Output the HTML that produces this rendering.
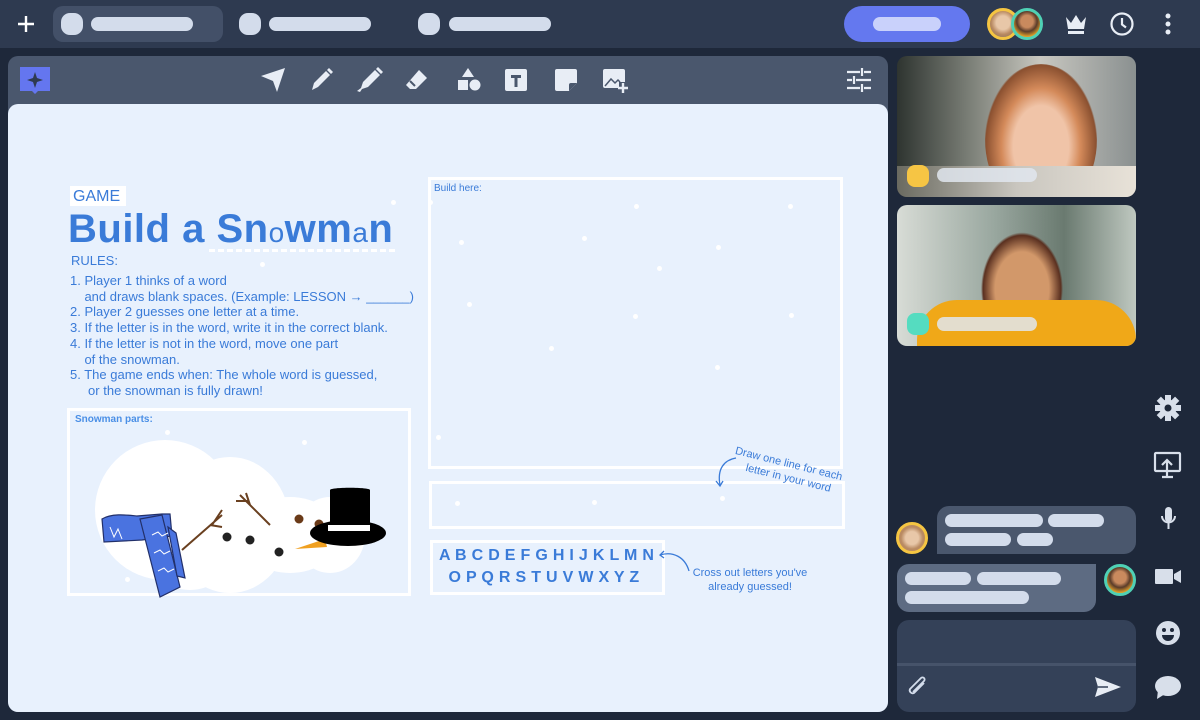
<!DOCTYPE html>
<html><head><meta charset="utf-8">
<style>
*{margin:0;padding:0;box-sizing:border-box}
body{width:1200px;height:720px;background:#1e283a;font-family:"Liberation Sans",sans-serif;position:relative;overflow:hidden}
.abs{position:absolute}
.pill{position:absolute;background:#d3dceb;border-radius:8px}
.blue{color:#3a7bd8}
.box{position:absolute;border:3px solid #fff}
.dot{position:absolute;width:5px;height:5px;border-radius:50%;background:#fff}
</style></head><body>
<!-- top bar -->
<div class="abs" style="left:0;top:0;width:1200px;height:48px;background:#2e3a50"></div>
<svg class="abs" style="left:16px;top:14px" width="20" height="20"><path d="M10 2v16M2 10h16" stroke="#fff" stroke-width="2.4"/></svg>
<div class="abs" style="left:53px;top:6px;width:170px;height:36px;border-radius:10px;background:#435068"></div>
<div class="pill" style="left:61px;top:13px;width:22px;height:22px;border-radius:9px"></div>
<div class="pill" style="left:91px;top:17px;width:102px;height:14px"></div>
<div class="pill" style="left:239px;top:13px;width:22px;height:22px;border-radius:9px"></div>
<div class="pill" style="left:269px;top:17px;width:102px;height:14px"></div>
<div class="pill" style="left:418px;top:13px;width:22px;height:22px;border-radius:9px"></div>
<div class="pill" style="left:449px;top:17px;width:102px;height:14px"></div>
<div class="abs" style="left:844px;top:6px;width:126px;height:36px;border-radius:18px;background:#6478ef"></div>
<div class="abs" style="left:873px;top:17px;width:68px;height:14px;border-radius:7px;background:#c9d1fb"></div>
<div class="abs" style="left:987px;top:8px;width:32px;height:32px;border-radius:50%;background:radial-gradient(circle at 50% 45%,#e8c7a8 0 35%,#b98a62 60%,#7b6a5a);border:3px solid #f5c542"></div>
<div class="abs" style="left:1011px;top:8px;width:32px;height:32px;border-radius:50%;background:radial-gradient(circle at 50% 40%,#c98a5e 0 30%,#5a3c2a 50%,#e0a12a 75%);border:3px solid #4fd1b5"></div>
<svg class="abs" style="left:1064px;top:13px" width="24" height="22"><path d="M2 4l5 6 5-8 5 8 5-6-2 12H4z" fill="#e8edf5"/><rect x="4" y="18" width="16" height="3" fill="#e8edf5"/></svg>
<svg class="abs" style="left:1109px;top:11px" width="26" height="26"><circle cx="13" cy="13" r="10.5" fill="none" stroke="#e8edf5" stroke-width="2.2"/><path d="M13 7v6.5l4 3" fill="none" stroke="#e8edf5" stroke-width="2.2"/></svg>
<svg class="abs" style="left:1163px;top:13px" width="10" height="22"><circle cx="5" cy="3" r="2.5" fill="#e8edf5"/><circle cx="5" cy="11" r="2.5" fill="#e8edf5"/><circle cx="5" cy="19" r="2.5" fill="#e8edf5"/></svg>

<!-- whiteboard -->
<div class="abs" style="left:8px;top:56px;width:880px;height:656px;border-radius:10px;background:#4a576d"></div>
<div class="abs" style="left:8px;top:104px;width:880px;height:608px;border-radius:10px;background:#e8f1fd"></div>
<svg class="abs" style="left:20px;top:66px" width="30" height="28"><path d="M0 1h30v24H18l-3 3-3-3H0z" fill="#6476ef"/><path d="M15 6l2 6 6 2-6 2-2 6-2-6-6-2 6-2z" fill="#2e3a50"/></svg>
<svg class="abs" style="left:255px;top:64px" width="400" height="32" fill="#e8edf5">
<path d="M6 12L30 4 22 28 18 17z"/>
<g transform="translate(55,4)"><path d="M2 22l2-7L16 3l4 4L8 19z"/><path d="M17 2l2-2 4 4-2 2z"/></g>
<g transform="translate(102,3)"><path d="M0 24l4-3 2-6L18 3l5 5-12 12-6 2-2 3z"/><path d="M19 2l2-2 5 5-2 2z"/></g>
<g transform="translate(150,4)"><path d="M14 2l8 8-11 11H5l-4-4z" fill="#e8edf5"/><path d="M5 13l5 5" stroke="#4a576d" stroke-width="2"/></g>
<g transform="translate(201,4)"><path d="M12 0l6 9H6z"/><rect x="2" y="12" width="10" height="10"/><circle cx="19" cy="17" r="5.5"/></g>
<g transform="translate(250,5)"><rect width="22" height="22" rx="2"/><path d="M6 6h10v3h-3.5v9h-3V9H6z" fill="#4a576d"/></g>
<g transform="translate(300,5)"><path d="M0 2a2 2 0 012-2h18a2 2 0 012 2v12l-8 8H2a2 2 0 01-2-2z"/><path d="M14 22v-6a2 2 0 012-2h6" fill="#4a576d"/></g>
<g transform="translate(348,5)"><path d="M0 2a2 2 0 012-2h18a2 2 0 012 2v11h-6v6H2a2 2 0 01-2-2z"/><path d="M2 17l6-7 4 4 3-3 2 2" fill="none" stroke="#4a576d" stroke-width="1.5"/><path d="M20 14v10M15 19h10" stroke="#e8edf5" stroke-width="2.4"/></g>
</svg>
<svg class="abs" style="left:847px;top:68px" width="24" height="24" stroke="#e8edf5" stroke-width="2.2"><path d="M0 4h13M17 4h7M15 0v8M0 12h5M9 12h15M7 8v8M0 20h13M17 20h7M15 16v8"/></svg>

<!-- snow dots -->
<div class="dot" style="left:428px;top:200px"></div><div class="dot" style="left:459px;top:240px"></div><div class="dot" style="left:634px;top:204px"></div><div class="dot" style="left:582px;top:236px"></div><div class="dot" style="left:716px;top:245px"></div><div class="dot" style="left:788px;top:204px"></div><div class="dot" style="left:657px;top:266px"></div><div class="dot" style="left:467px;top:302px"></div><div class="dot" style="left:549px;top:346px"></div><div class="dot" style="left:715px;top:365px"></div><div class="dot" style="left:633px;top:314px"></div><div class="dot" style="left:789px;top:313px"></div><div class="dot" style="left:436px;top:435px"></div><div class="dot" style="left:720px;top:496px"></div><div class="dot" style="left:592px;top:500px"></div><div class="dot" style="left:455px;top:501px"></div><div class="dot" style="left:302px;top:440px"></div><div class="dot" style="left:165px;top:430px"></div><div class="dot" style="left:260px;top:262px"></div><div class="dot" style="left:391px;top:200px"></div><div class="dot" style="left:125px;top:577px"></div>

<!-- text -->
<div class="abs blue" style="left:70px;top:186px;width:56px;height:20px;background:#fff;font-size:16px;padding:1px 3px;line-height:19px">GAME</div>
<div class="abs blue" style="left:68px;top:205px;font-size:40px;line-height:48px;font-weight:bold;white-space:nowrap;letter-spacing:0.5px">Build a Sn<span style="font-size:28px;font-weight:normal">o</span>wm<span style="font-size:28px;font-weight:normal">a</span>n</div>
<div class="abs" style="left:209px;top:249px;width:186px;border-top:3px dashed #fff"></div>
<div class="abs blue" style="left:71px;top:253px;font-size:13px;line-height:16px">RULES:</div>
<div class="abs blue" style="left:70px;top:273px;font-size:13px;line-height:15.7px;white-space:nowrap">1. Player 1 thinks of a word<br>&nbsp;&nbsp;&nbsp;&nbsp;and draws blank spaces. (Example: LESSON → ______)<br>2. Player 2 guesses one letter at a time.<br>3. If the letter is in the word, write it in the correct blank.<br>4. If the letter is not in the word, move one part<br>&nbsp;&nbsp;&nbsp;&nbsp;of the snowman.<br>5. The game ends when: The whole word is guessed,<br>&nbsp;&nbsp;&nbsp;&nbsp;&nbsp;or the snowman is fully drawn!</div>

<div class="box" style="left:428px;top:177px;width:415px;height:292px"></div>
<div class="abs blue" style="left:434px;top:183px;font-size:10px">Build here:</div>
<div class="box" style="left:429px;top:481px;width:416px;height:48px"></div>
<div class="box" style="left:430px;top:540px;width:235px;height:55px"></div>
<div class="abs blue" style="left:439px;top:545px;font-size:16px;line-height:22px;letter-spacing:0.3px;font-weight:bold;white-space:nowrap">A B C D E F G H I J K L M N<br>&nbsp;&nbsp;O P Q R S T U V W X Y Z</div>
<div class="abs blue" style="left:688px;top:566px;font-size:11px;line-height:14px;text-align:center;width:124px">Cross out letters you've<br>already guessed!</div>
<svg class="abs" style="left:655px;top:545px" width="40" height="30" fill="none" stroke="#3a7bd8" stroke-width="1.3"><path d="M34 26C30 12 18 6 5 10M9 6L5 10 9 13"/></svg>
<div class="abs blue" style="left:737px;top:444px;font-size:11px;line-height:14px;text-align:center;transform:rotate(14deg);transform-origin:left top;white-space:nowrap">Draw one line for each<br>&nbsp;&nbsp;letter in your word</div>
<svg class="abs" style="left:712px;top:455px" width="30" height="35" fill="none" stroke="#3a7bd8" stroke-width="1.3"><path d="M24 3C12 5 5 14 8 30M4 26l4 5 3-5"/></svg>

<!-- snowman parts -->
<div class="box" style="left:67px;top:408px;width:344px;height:188px"></div>
<div class="abs blue" style="left:75px;top:414px;font-size:10px;font-weight:bold;color:#4a8fe6">Snowman parts:</div>
<svg class="abs" style="left:90px;top:435px" width="310" height="170">
<g fill="#fff"><circle cx="75" cy="75" r="70"/><ellipse cx="140" cy="90" rx="60" ry="68"/><ellipse cx="200" cy="100" rx="50" ry="38"/><ellipse cx="240" cy="100" rx="35" ry="38"/><circle cx="100" cy="110" r="45"/></g>
<g fill="#4a73e0" stroke="#22306a" stroke-width="1.2"><path d="M12 84c10-6 25-4 35-3l25-2 8 0 2 22-30 4-38 2z"/><path d="M50 84l22-4 18 72-20 10z"/><path d="M78 92l8 6 9 45-8-2z"/></g>
<path d="M20 92l4 10 4-8 4 10M62 100l6 -3 4 4 6-3M64 118l6-3 4 4 6-3M68 136l6-3 4 4 6-3" stroke="#fff" fill="none" stroke-width="1"/>
<g stroke="#6a4020" stroke-width="2" fill="none"><path d="M92 115l40-35M122 90l10-15M120 90l12 2"/><path d="M180 90l-30-30M160 70l-4-12M158 66l-12 0"/></g>
<g fill="#222"><circle cx="137" cy="102" r="4.5"/><circle cx="160" cy="105" r="4.5"/><circle cx="189" cy="117" r="4.5"/></g>
<g fill="#6a3a18"><circle cx="209" cy="84" r="4.5"/><circle cx="229" cy="89" r="4.5"/></g>
<path d="M205 114l30-10 2 8z" fill="#f0a020"/>
<path d="M240 55c0-3 40-3 40 0v35h-40z" fill="#000"/><ellipse cx="258" cy="98" rx="38" ry="13" fill="#000"/><path d="M238 90h42v6h-42z" fill="#fff"/><rect x="240" y="80" width="40" height="10" fill="#000"/>
</svg>

<!-- videos -->
<div class="abs" style="left:897px;top:56px;width:239px;height:141px;border-radius:10px;overflow:hidden;background:linear-gradient(90deg,#2e3430,#7a7e76 30%,#c8c7c0 60%,#8a9090)">
 <div class="abs" style="left:88px;top:8px;width:112px;height:150px;border-radius:50%;background:radial-gradient(ellipse at 50% 55%,#f0c4a8 0 35%,#d48a5a 50%,#8a5030 70%,transparent 72%)"></div>
 <div class="abs" style="left:0;top:110px;width:239px;height:31px;background:linear-gradient(90deg,#6a6a60,#c9c6bf 50%,#e8e2d8)"></div>
</div>
<div class="abs" style="left:907px;top:165px;width:22px;height:22px;border-radius:8px;background:#f6c544"></div>
<div class="abs" style="left:937px;top:168px;width:100px;height:14px;border-radius:7px;background:#e1e6ee;opacity:.85"></div>
<div class="abs" style="left:897px;top:205px;width:239px;height:141px;border-radius:10px;overflow:hidden;background:linear-gradient(90deg,#d8dcd6,#9aa8a0 40%,#6a7a70 70%,#bfc8c0)">
 <div class="abs" style="left:75px;top:15px;width:100px;height:115px;border-radius:50%;background:radial-gradient(ellipse at 50% 60%,#d2986a 0 38%,#5a3020 55%,transparent 58%)"></div>
 <div class="abs" style="left:20px;top:95px;width:219px;height:60px;border-radius:40px 40px 0 0;background:#f0a818"></div>
</div>
<div class="abs" style="left:907px;top:313px;width:22px;height:22px;border-radius:8px;background:#55dcc0"></div>
<div class="abs" style="left:937px;top:317px;width:100px;height:14px;border-radius:7px;background:#e1e6ee;opacity:.85"></div>

<!-- chat -->
<div class="abs" style="left:937px;top:506px;width:199px;height:48px;border-radius:12px 12px 12px 0;background:#4a576d"></div>
<div class="pill" style="left:945px;top:514px;width:98px;height:13px;border-radius:7px"></div>
<div class="pill" style="left:1048px;top:514px;width:56px;height:13px;border-radius:7px"></div>
<div class="pill" style="left:945px;top:533px;width:66px;height:13px;border-radius:7px"></div>
<div class="pill" style="left:1017px;top:533px;width:36px;height:13px;border-radius:7px"></div>
<div class="abs" style="left:896px;top:522px;width:32px;height:32px;border-radius:50%;background:radial-gradient(circle,#e8c7a8 0 35%,#b98a62 60%);border:3px solid #f5c542"></div>
<div class="abs" style="left:897px;top:564px;width:199px;height:48px;border-radius:12px 0 12px 12px;background:#5d6b82"></div>
<div class="pill" style="left:905px;top:572px;width:66px;height:13px;border-radius:7px"></div>
<div class="pill" style="left:977px;top:572px;width:84px;height:13px;border-radius:7px"></div>
<div class="pill" style="left:905px;top:591px;width:124px;height:13px;border-radius:7px"></div>
<div class="abs" style="left:1104px;top:564px;width:32px;height:32px;border-radius:50%;background:radial-gradient(circle at 50% 40%,#c98a5e 0 30%,#5a3c2a 50%,#e0a12a 75%);border:3px solid #4fd1b5"></div>
<div class="abs" style="left:897px;top:620px;width:239px;height:92px;border-radius:12px;background:#344158"></div>
<div class="abs" style="left:897px;top:663px;width:239px;height:3px;background:#46536a"></div>
<svg class="abs" style="left:905px;top:675px" width="26" height="26" fill="none" stroke="#d3dceb" stroke-width="1.8"><path d="M19 8L9 18a3 3 0 01-4-4L16 3a2 2 0 013 3L8 17"/></svg>
<svg class="abs" style="left:1094px;top:676px" width="28" height="22"><path d="M1 1l26 10L1 21l3-10z" fill="#e8edf5"/><path d="M4 11h10" stroke="#344158" stroke-width="1.5"/></svg>

<!-- side icons -->
<svg class="abs" style="left:1152px;top:392px" width="32" height="310" fill="#d8dfea">
<g transform="translate(16,16)"><circle r="8.5"/><g><rect x="-3" y="-13" width="6" height="26"/><rect x="-3" y="-13" width="6" height="26" transform="rotate(45)"/><rect x="-3" y="-13" width="6" height="26" transform="rotate(90)"/><rect x="-3" y="-13" width="6" height="26" transform="rotate(135)"/></g><circle r="3.5" fill="#1e283a"/></g>
<g transform="translate(2,60)" fill="none" stroke="#d8dfea" stroke-width="2.2"><rect x="1" y="1" width="25" height="18" rx="1"/><path d="M13 24V9M8 13l5-5 5 5M8 25h11"/></g>
<g transform="translate(9,115)"><rect x="4" y="0" width="7" height="15" rx="3.5"/><path d="M1 9a6.5 6.5 0 0013 0M7.5 16v6" fill="none" stroke="#d8dfea" stroke-width="2"/></g>
<g transform="translate(3,177)"><rect x="0" y="0" width="18" height="15" rx="1"/><path d="M19 5l7-4v13l-7-4z"/></g>
<g transform="translate(4,229)"><circle cx="12" cy="12" r="12"/><circle cx="8" cy="9" r="2" fill="#1e283a"/><circle cx="16" cy="9" r="2" fill="#1e283a"/><path d="M6 14h12a6 6 0 01-12 0z" fill="#1e283a"/></g>
<g transform="translate(3,284)"><ellipse cx="13" cy="10" rx="13" ry="10"/><path d="M3 14l-1 9 8-5z"/></g>
</svg>
</body></html>
